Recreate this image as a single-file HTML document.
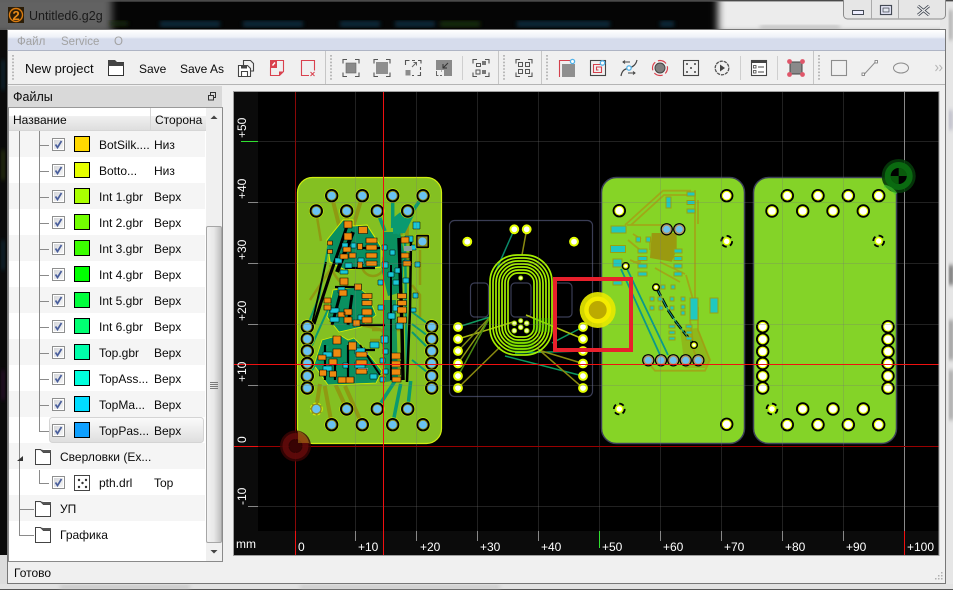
<!DOCTYPE html>
<html><head><meta charset="utf-8"><style>
html,body{margin:0;padding:0;background:#000}
#r{position:relative;width:953px;height:590px;overflow:hidden;background:#111}
svg{position:absolute;left:0;top:0;display:block}
text{font-family:"Liberation Sans","Noto Sans CJK SC",sans-serif;font-size:12px;fill:#0a0a0a}
.c text{fill:#fff}
</style></head><body><div id="r">
<svg width="953" height="590" viewBox="0 0 953 590">
<defs>
<linearGradient id="mg" x1="0" y1="0" x2="0" y2="1"><stop offset="0" stop-color="#fff"/><stop offset=".35" stop-color="#eef1f8"/><stop offset=".45" stop-color="#d6dcec"/><stop offset="1" stop-color="#d6dcec"/></linearGradient>
<linearGradient id="sg" x1="0" y1="0" x2="0" y2="1"><stop offset="0" stop-color="#fbfbfb"/><stop offset="1" stop-color="#dedede"/></linearGradient>
<linearGradient id="th" x1="0" y1="0" x2="1" y2="0"><stop offset="0" stop-color="#f2f2f2"/><stop offset=".5" stop-color="#e8e8e8"/><stop offset="1" stop-color="#bdbdbd"/></linearGradient>
<linearGradient id="cb" x1="0" y1="0" x2="1" y2="1"><stop offset="0" stop-color="#d4d6da"/><stop offset="1" stop-color="#f6f6f6"/></linearGradient>
<filter id="b4"><feGaussianBlur stdDeviation="4"/></filter>
<filter id="b2"><feGaussianBlur stdDeviation="2"/></filter>
<g id="p4"><circle r="6.7" fill="#000"/><circle r="4.9" fill="#e8ff00"/><circle r="3.8" fill="#fff"/></g>
<g id="p1"><circle r="7.2" fill="#d8f000"/><circle r="6.7" fill="#000"/><circle r="4.9" fill="#8e8e20"/><circle r="4" fill="#69c2f2"/></g>
<g id="p2"><circle r="4.9" fill="#e4ff00"/><circle r="2.9" fill="#fff"/></g>
<g id="pd"><circle r="5.4" fill="none" stroke="#000" stroke-width="1.8" stroke-dasharray="5 3.4"/><circle r="4" fill="#e8ff00"/><circle r="2.7" fill="#fff"/></g>
<g id="pg"><circle r="6.2" fill="#000"/><circle r="5" fill="#b09a68"/><circle r="3.5" fill="#6cc0ee"/></g>
<g id="ps"><circle r="4" fill="#000"/><circle r="2.6" fill="#e8ff00"/><circle r="1.5" fill="#fff"/></g>
<g id="cbx"><rect x=".5" y=".5" width="12" height="12" fill="#fff" stroke="#8e8f8f"/><rect x="2" y="2" width="9" height="9" fill="url(#cb)"/><path d="M3.5 6.5l2 3 4-6.5" fill="none" stroke="#4a5f9c" stroke-width="1.7"/></g>
<g id="fld"><path d="M.5 2.5h15v13H.5z" fill="#fff" stroke="#444"/><path d="M0 2h6l3-2h7v4H7L5 3H0z" fill="#fff"/><path d="M.5 3V.5h5l3 3h7.500" fill="none" stroke="#444"/><path d="M6 .5l3 3h7V1H8z" fill="#555"/></g>
<path id="cor" d="M-8 -4.500v-4h4M4 -8.500h4v4M8 4.500v4h-4M-4 8.500h-4v-4" fill="none" stroke="#555" stroke-width="1.100"/>
</defs>

<!-- desktop / title -->
<rect width="953" height="590" fill="#050505"/>
<rect x="718" y="-8" width="240" height="42" fill="#ececec" filter="url(#b4)"/>
<rect x="940" y="0" width="13" height="590" fill="#e6e6e6"/>
<rect x="0" y="0" width="953" height="1" fill="#4a4a4a"/>
<rect x="0" y="1" width="953" height="1" fill="#6a6a6a" opacity=".5"/>
<rect x="-10" y="-6" width="122" height="40" fill="#626262" filter="url(#b4)"/>
<g filter="url(#b2)" opacity=".75">
<rect x="110" y="21" width="18" height="5" fill="#1a3308"/><rect x="160" y="21" width="60" height="6" fill="#07384f"/><rect x="243" y="21" width="60" height="6" fill="#07384f"/><rect x="340" y="21" width="40" height="6" fill="#07384f"/><rect x="395" y="21" width="40" height="6" fill="#07384f"/><rect x="440" y="21" width="40" height="6" fill="#1e3a08"/><rect x="517" y="21" width="30" height="6" fill="#07384f"/><rect x="540" y="21" width="70" height="6" fill="#07384f"/><rect x="660" y="21" width="14" height="6" fill="#07384f"/>
</g>
<rect x="0" y="30" width="7" height="525" fill="#0a0a0a"/>
<g filter="url(#b2)" opacity=".6"><rect x="1" y="60" width="4" height="30" fill="#10384a"/><rect x="1" y="150" width="4" height="30" fill="#3a4a10"/><rect x="1" y="240" width="4" height="30" fill="#10384a"/><rect x="1" y="370" width="4" height="30" fill="#3a1040"/></g>
<rect x="0" y="555" width="7" height="35" fill="#dcdcdc"/>
<rect x="0" y="584" width="953" height="5" fill="#e2e2e2"/>
<rect x="0" y="589" width="953" height="1" fill="#555"/>
<rect x="60" y="585" width="130" height="4" fill="#c4c4c4" filter="url(#b2)"/><rect x="300" y="585" width="200" height="4" fill="#c8c8c8" filter="url(#b2)"/>
<g filter="url(#b2)"><rect x="949" y="10" width="3" height="30" fill="#999"/><rect x="949" y="110" width="3" height="20" fill="#aab"/><rect x="949" y="265" width="4" height="20" fill="#555"/><rect x="949" y="320" width="4" height="40" fill="#888"/><rect x="949" y="370" width="4" height="50" fill="#999"/></g>
<rect x="850" y="3" width="60" height="5" fill="#bbb" filter="url(#b2)"/><rect x="760" y="25" width="80" height="5" fill="#c4c4c4" filter="url(#b2)"/>

<!-- window buttons -->
<path d="M843.500 0v15a4 4 0 0 0 4 4h94a4 4 0 0 0 4-4V0" fill="#e6e6e6" stroke="#8a8a8a"/>
<path d="M871.500 0v19M898.500 0v19" stroke="#aaa"/>
<rect x="852.500" y="10.500" width="11" height="4" fill="#eef" stroke="#444a55"/>
<rect x="880.500" y="5.500" width="11" height="9" fill="#eef" stroke="#444a55" stroke-width="1.200"/><rect x="883" y="8" width="6" height="4" fill="#e4e8f0" stroke="#444a55" stroke-width=".8"/>
<path d="M918 6l11 9M929 6l-11 9" stroke="#444a55" stroke-width="3"/><path d="M918 6l11 9M929 6l-11 9" stroke="#eee" stroke-width="1.200"/>

<!-- title icon + text -->
<rect x="8" y="7" width="16" height="16" fill="#2b1d08"/>
<circle cx="16" cy="15" r="6.500" fill="none" stroke="#d87a10" stroke-width="1.400"/>
<text x="12.500" y="20" style="font-size:13px;font-weight:bold;fill:#e88a18">2</text>
<text x="29" y="20" style="font-size:12.500px;fill:#1a1a1a">Untitled6.g2g</text>

<!-- client -->
<rect x="7" y="29" width="939" height="555" fill="#f0f0f0"/>
<rect x="7.500" y="29.500" width="938" height="554" fill="none" stroke="#777"/>
<rect x="8" y="30" width="937" height="20" fill="url(#mg)"/>
<rect x="8" y="50" width="937" height="1" fill="#aeb4c4"/>
<rect x="8" y="84" width="937" height="1" fill="#b4b4b4"/>
<rect x="8" y="51" width="937" height="33" fill="#f0f0f0"/>
<text x="17" y="45" style="font-size:11.500px;fill:#a2a2a2">Файл</text>
<text x="61" y="45" style="font-size:11.500px;fill:#a2a2a2">Service</text>
<text x="114" y="45" style="font-size:11.500px;fill:#a2a2a2">О</text>

<!-- toolbar separators -->
<g stroke="#b8b8b8" stroke-width="2" stroke-dasharray="1.600 1.700" fill="none"><path d="M13 55v26M331 55v26M504 55v26M547 55v26M819 55v26"/></g>
<path d="M325.500 51v33M498.500 51v33M541.500 51v33M813.500 51v33" stroke="#c6c6c6"/>
<path d="M462.500 56v24M740.500 56v24M777.500 56v24" stroke="#cfcfcf"/>
<text x="25" y="73" style="font-size:13px">New project</text>
<text x="139" y="73">Save</text>
<text x="180" y="73">Save As</text>

<!-- toolbar icons -->
<path d="M108.500 62.500h15v13h-15z" fill="#fff" stroke="#333"/><path d="M108 60h7l2.500 2.500h6.500v3.500H108z" fill="#444"/>
<g fill="none" stroke="#444" stroke-width="1.100"><path d="M238.500 65.500h9l3 3v8h-12z" fill="#fff"/><path d="M243.500 65v-4.500h7l3 3v7.500h-3"/><path d="M241.500 71.500h6v5h-6z"/></g><rect x="241" y="65" width="6" height="3.500" fill="#444"/>
<g fill="none" stroke="#d9414e" stroke-width="1.100"><path d="M277 60.500h6.500v11l-4 4h-9v-8"/></g><path d="M270 60h7v8h-7z" fill="#d9414e"/><path d="M272 65l2.500-3 1 1-2.500 3z" fill="#fff"/><path d="M279 76v-4.500h4.500z" fill="#d9414e"/>
<path d="M309 75.500h-7.500v-15h13v10" fill="none" stroke="#d9414e" stroke-width="1.100"/><path d="M310.500 72l4 4M314.500 72l-4 4" stroke="#d9414e" stroke-width="1"/>

<use href="#cor" x="351" y="68"/><rect x="346" y="63" width="10" height="10" fill="#8a8a8a" stroke="#666" stroke-width=".6"/>
<use href="#cor" x="382" y="68"/><rect x="376" y="62" width="12" height="12" fill="#8f8f8f"/>
<path d="M405.500 65v-4.500h4M412 60.500h3M418 60.500h3v3M420.500 67v3M420.500 72v3.500h-3M414 75.500h-2" fill="none" stroke="#555" stroke-width="1.100"/><rect x="405.500" y="70" width="5" height="5.500" fill="#8c8c8c"/><path d="M412 67l4.500-4.500M413.500 62.500h3v3" fill="none" stroke="#666"/>
<path d="M436 60h16v16h-8v-6h-8z" fill="#8a8a8a"/><path d="M448 63l-5 5M443 64v4h4" fill="none" stroke="#333"/><path d="M436.500 71v4.500h2M440 75.500h2M442 71h-1" fill="none" stroke="#666"/>
<use href="#cor" x="481" y="68"/><rect x="476.500" y="63.500" width="4" height="3" fill="none" stroke="#555"/><rect x="482" y="61" width="4" height="4" fill="#777"/><rect x="482" y="70" width="4" height="4" fill="#777"/><rect x="476" y="70" width="4" height="4" fill="none" stroke="#555"/>
<use href="#cor" x="524" y="68"/><g fill="none" stroke="#555"><rect x="518.500" y="62.500" width="4" height="4"/><rect x="525.500" y="62.500" width="4" height="4"/><rect x="518.500" y="69.500" width="4" height="4"/><rect x="525.500" y="69.500" width="4" height="4"/></g>

<path d="M559.500 77v-16.500h11" fill="none" stroke="#d4404c" stroke-width="1.100"/><rect x="562" y="64" width="13" height="13" fill="#8f8f8f"/><circle cx="572.500" cy="61.500" r="2.100" fill="#fff" stroke="#54b4ea" stroke-width="1.300"/>
<rect x="590.500" y="60.500" width="15" height="15" fill="none" stroke="#444" stroke-width="1.100"/><path d="M602 64.500h-8.500v8h8v-5.500h-5v3h2" fill="none" stroke="#d4404c" stroke-width="1.100"/><circle cx="602.500" cy="63" r="2.200" fill="#fff" stroke="#54b4ea" stroke-width="1.300"/>
<path d="M621 76c1-6 4-7 8-8s7-3 8-8" fill="none" stroke="#444" stroke-width="1.200"/><circle cx="629" cy="68" r="2.200" fill="#fff" stroke="#54b4ea" stroke-width="1.300"/><path d="M623 62h7M625 60.500l-2 1.500 2 1.500M628 73h7M633 71.500l2 1.500-2 1.500" fill="none" stroke="#444"/>
<circle cx="660" cy="68" r="5" fill="#7f7f7f" stroke="#444"/><circle cx="660" cy="68" r="7.500" fill="none" stroke="#d9414e" stroke-width="1.200" stroke-dasharray="9 3" stroke-dashoffset="3"/>
<rect x="683.500" y="60.500" width="15" height="15" fill="none" stroke="#444" stroke-width="1.100"/><g fill="#444"><circle cx="687" cy="64" r="1"/><circle cx="695" cy="64" r="1"/><circle cx="691" cy="68" r="1"/><circle cx="687" cy="72" r="1"/><circle cx="695" cy="72" r="1"/></g>
<circle cx="722" cy="68" r="6.800" fill="none" stroke="#555" stroke-width="1.300" stroke-dasharray="3.300 .9"/><path d="M720 64.500v7l5-3.500z" fill="#444"/>
<rect x="751.500" y="60.500" width="15" height="15" fill="#fff" stroke="#444" stroke-width="1.100"/><rect x="751" y="60" width="16" height="3" fill="#444"/><path d="M758 67h6M758 72h6" stroke="#444"/><rect x="753.500" y="65.500" width="2.500" height="2.500" fill="none" stroke="#444" stroke-width=".8"/><rect x="753.500" y="70.500" width="2.500" height="2.500" fill="none" stroke="#444" stroke-width=".8"/>
<rect x="790" y="62" width="12" height="12" fill="#8a8a8a" stroke="#444"/><g fill="#e0566a"><circle cx="789.500" cy="61.500" r="2.400"/><circle cx="802.500" cy="61.500" r="2.400"/><circle cx="789.500" cy="74.500" r="2.400"/><circle cx="802.500" cy="74.500" r="2.400"/></g>
<rect x="831.500" y="60.500" width="15" height="15" fill="none" stroke="#8c8c8c" stroke-width="1.100"/>
<path d="M864 74.500l11-12" stroke="#8c8c8c"/><rect x="862" y="73" width="2.500" height="2.500" fill="#fff" stroke="#777" stroke-width=".8"/><rect x="875" y="60.500" width="2.500" height="2.500" fill="#fff" stroke="#777" stroke-width=".8"/>
<ellipse cx="901" cy="68" rx="7.500" ry="5" fill="none" stroke="#8c8c8c"/>
<path d="M935.500 65l2.500 3-2.500 3M939.500 65l2.500 3-2.500 3" fill="none" stroke="#b4b4b4"/>

<!-- dock -->
<rect x="8" y="86" width="214" height="22" fill="#d9d9d9"/>
<text x="13" y="101" style="font-size:12.500px">Файлы</text>
<rect x="210.500" y="92.500" width="5" height="5" fill="none" stroke="#333"/><rect x="208.500" y="95.500" width="5" height="4.500" fill="#d9d9d9" stroke="#333"/>
<rect x="8" y="108" width="215" height="453.500" fill="#fff"/>
<path d="M8.500 108v453.500h214V108" fill="none" stroke="#8a8a8a"/><path d="M8 107.500h215" stroke="#9a9a9a"/>
<rect x="9" y="108" width="198" height="22" fill="url(#sg)"/><rect x="9" y="108" width="198" height="8" fill="#fff"/>
<path d="M150.500 108v22M9 130.500h198" stroke="#d6d6d6"/>
<text x="13" y="124">Название</text><text x="155" y="124">Сторона</text>

<!-- rows -->
<g fill="#f5f5f5"><rect x="9" y="131" width="196" height="26"/><rect x="9" y="183" width="196" height="26"/><rect x="9" y="235" width="196" height="26"/><rect x="9" y="287" width="196" height="26"/><rect x="9" y="339" width="196" height="26"/><rect x="9" y="391" width="196" height="26"/><rect x="9" y="443" width="196" height="26"/><rect x="9" y="495" width="196" height="26"/></g>
<path d="M19.500 131v404.500H34M19.500 509.500H34M39.500 131v300.500H49M39.500 470v13.500H49" fill="none" stroke="#8a8a8a"/>
<path d="M39.500 145.500H49M39.500 171.500H49M39.500 197.500H49M39.500 223.500H49M39.500 249.500H49M39.500 275.500H49M39.500 301.500H49M39.500 327.500H49M39.500 353.500H49M39.500 379.500H49M39.500 405.500H49" stroke="#8a8a8a"/>
<rect x="49.500" y="417.500" width="154" height="25" rx="3" fill="url(#sg)" stroke="#d4d4d4"/>
<g>
<use href="#cbx" x="52" y="138"/><use href="#cbx" x="52" y="164"/><use href="#cbx" x="52" y="190"/><use href="#cbx" x="52" y="216"/><use href="#cbx" x="52" y="242"/><use href="#cbx" x="52" y="268"/><use href="#cbx" x="52" y="294"/><use href="#cbx" x="52" y="320"/><use href="#cbx" x="52" y="346"/><use href="#cbx" x="52" y="372"/><use href="#cbx" x="52" y="398"/><use href="#cbx" x="52" y="424"/><use href="#cbx" x="52" y="476"/>
</g>
<g stroke="#000">
<rect x="74.500" y="136.500" width="15" height="15" fill="#ffd800"/>
<rect x="74.500" y="162.500" width="15" height="15" fill="#e6ff00"/>
<rect x="74.500" y="188.500" width="15" height="15" fill="#aaff00"/>
<rect x="74.500" y="214.500" width="15" height="15" fill="#72ff00"/>
<rect x="74.500" y="240.500" width="15" height="15" fill="#3cff00"/>
<rect x="74.500" y="266.500" width="15" height="15" fill="#00ff00"/>
<rect x="74.500" y="292.500" width="15" height="15" fill="#00ff3c"/>
<rect x="74.500" y="318.500" width="15" height="15" fill="#00ff72"/>
<rect x="74.500" y="344.500" width="15" height="15" fill="#00ffaa"/>
<rect x="74.500" y="370.500" width="15" height="15" fill="#00ffdd"/>
<rect x="74.500" y="396.500" width="15" height="15" fill="#00ddff"/>
<rect x="74.500" y="422.500" width="15" height="15" fill="#0ea0ff"/>
</g>
<text x="99" y="149">BotSilk....</text><text x="154" y="149">Низ</text>
<text x="99" y="175">Botto...</text><text x="154" y="175">Низ</text>
<text x="99" y="201">Int 1.gbr</text><text x="154" y="201">Верх</text>
<text x="99" y="227">Int 2.gbr</text><text x="154" y="227">Верх</text>
<text x="99" y="253">Int 3.gbr</text><text x="154" y="253">Верх</text>
<text x="99" y="279">Int 4.gbr</text><text x="154" y="279">Верх</text>
<text x="99" y="305">Int 5.gbr</text><text x="154" y="305">Верх</text>
<text x="99" y="331">Int 6.gbr</text><text x="154" y="331">Верх</text>
<text x="99" y="357">Top.gbr</text><text x="154" y="357">Верх</text>
<text x="99" y="383">TopAss...</text><text x="154" y="383">Верх</text>
<text x="99" y="409">TopMa...</text><text x="154" y="409">Верх</text>
<text x="99" y="435">TopPas...</text><text x="154" y="435">Верх</text>
<path d="M17 461l6-5v5z" fill="#333"/>
<use href="#fld" x="35" y="449"/><text x="60" y="461">Сверловки (Ex...</text>
<rect x="74.500" y="475.500" width="15" height="15" fill="#fff" stroke="#444"/><g fill="#333"><circle cx="79" cy="480" r="1.200"/><circle cx="86" cy="480" r="1.200"/><circle cx="82.500" cy="483" r="1.200"/><circle cx="79" cy="487" r="1.200"/><circle cx="86" cy="487" r="1.200"/></g>
<text x="99" y="487">pth.drl</text><text x="154" y="487">Top</text>
<use href="#fld" x="35" y="501"/><text x="60" y="513">УП</text>
<use href="#fld" x="35" y="527"/><text x="60" y="539">Графика</text>

<!-- scrollbar -->
<rect x="206" y="108" width="16" height="453" fill="#f0f0f0"/>
<path d="M210.500 119l3.500-3.500 3.500 3.500z" fill="#444"/>
<rect x="206.500" y="226.500" width="15" height="316" rx="1.500" fill="url(#th)" stroke="#a6a6a6"/>
<path d="M210 382.500h8M210 384.500h8M210 386.500h8M210 388.500h8" stroke="#7a7a7a"/>
<path d="M210.500 550l3.500 3.500 3.500-3.500z" fill="#444"/>
<text x="14" y="577">Готово</text>
<g fill="#b0b0b0"><rect x="941" y="578" width="1.500" height="1.500"/><rect x="938" y="578" width="1.500" height="1.500"/><rect x="941" y="575" width="1.500" height="1.500"/><rect x="935" y="578" width="1.500" height="1.500"/><rect x="938" y="575" width="1.500" height="1.500"/><rect x="941" y="572" width="1.500" height="1.500"/></g>

<!-- CANVAS -->
<svg x="234" y="92" width="705" height="463" viewBox="234 92 705 463" class="c">
<rect x="234" y="92" width="705" height="463" fill="#000"/>
<rect x="234" y="92" width="24" height="463" fill="#0b0b0b"/>
<rect x="234" y="531" width="705" height="24" fill="#0b0b0b"/>

<!-- Board 1 -->
<rect x="297.500" y="177.500" width="144" height="266" rx="15" fill="#84c022" stroke="#d0ee10" stroke-width="1.200"/>
<!-- olive -->
<g fill="none" stroke="#8f9a12" stroke-width="4">
<path d="M331.700 196l9 36M362.300 196l-9 30M346.700 211v14M407.700 211l-1 24"/>
<path d="M331.700 424l-7-38M346.700 409l-11-24M362 424l-17-38M316 409l4-25"/>
</g>
<g fill="none" stroke="#8f9a12" stroke-width="2.500">
<path d="M316 211l5 30M330 265q8 20 20 22M310 300l30-45"/>
<path d="M355 318v6l25 5 10 10v30l-10 10M372 330h30M380 340h-10M345 345l-5 30"/>
<path d="M412 285l8 10v22M420 250v35M398 225l4 10"/>
<circle cx="373" cy="265" r="11"/>
</g>
<!-- pours -->
<path d="M327 240l16-20h10v6l14-1 11 17 3 5v20l-36 3-15-8z" fill="#0a9060" stroke="#d8f000"/>
<path d="M333 290l25-3 10 8 8 20-15 12-22 5-12-15z" fill="#0a9060" stroke="#d8f000" stroke-width=".8"/>
<path d="M322 340l18-5 8 5 6-2 8 8 20 25-6 12-48 2-14-20z" fill="#0a9060" stroke="#d8f000" stroke-width=".8"/>
<path d="M384 232h16l4 20-2 40-14 4-6-24z" fill="#0a9060"/>
<path d="M384 300h12l2 80-12 2-4-40z" fill="#0a9060" opacity=".9"/>
<!-- teal -->
<g fill="none" stroke="#0a9a70" stroke-width="3.500">
<path d="M377 211l8 20M392.700 196v32M423 196l-26 38"/>
<path d="M377 409l18-28M392.700 424l8-40M407.700 409l3-28"/>
<path d="M405 240l2 140" stroke-width="2.500"/>
</g>
<g fill="none" stroke="#0a9a70" stroke-width="2">
<path d="M307 327l12-30 10-55M309 352l20-45M308 376l20-30"/>
<path d="M432 327l-20-15M432 352l-20-20M432 376l-20-16M432 339l-20-15"/>
</g>
<path d="M393 218l10-8 12 3-10 20-12 1z" fill="#0a9a70"/>
<!-- black clearances -->
<g fill="none" stroke="#000">
<path d="M347 226l-6 18-12 34-15 46" stroke-width="3"/>
<path d="M353 232l-8 20-8 20" stroke-width="4"/>
<path d="M326 262l-14 62" stroke-width="1.800"/>
<path d="M399 238l3 90 1 52" stroke-width="3.500"/>
<path d="M411 240l-1 70-3 72" stroke-width="2.500"/>
<path d="M391 265v115" stroke-width="2"/>
<path d="M360 248h20M345 268h30M335 287h22M355 325h30M335 360v20M348 345v35M325 345v35M360 350h15" stroke-width="2.200"/>
<path d="M340 295l-8 30M352 295l-4 30" stroke-width="3"/>
<path d="M360 345l20 30" stroke-width="2"/>
</g>
<!-- cyan -->
<path fill="#18c8d8" stroke="#000" stroke-width=".5" d="M342 243h6v6h-6zM351 243h5v5h-5zM335 258h7v5h-7zM358 258h6v6h-6zM340 270h8v4h-8zM345 263h7v5h-7zM382 245h5v5h-5zM390 250h5v5h-5zM382 262h6v6h-6zM395 268h5v5h-5zM404 260h6v5h-6zM411 245h5v5h-5zM415 262h5v5h-5zM388 272h6v5h-6zM378 280h5v5h-5zM393 280h6v5h-6zM403 278h6v5h-6zM405 236h8v6h-8zM338 287h7v6h-7zM330 308h9v5h-9zM330 317h9v5h-9zM358 315h6v5h-6zM370 342h9v6h-9zM323 352h9v5h-9zM323 366h9v5h-9zM381 336h7v7h-7zM388 313h7v6h-7zM396 323h7v6h-7zM383 349h5v5h-5zM380 358h5v5h-5zM383 369h5v5h-5zM380 377h5v5h-5zM370 374h7v5h-7zM411 308h5v4h-5zM413 293h5v5h-5zM355 362h10v6h-10zM355 348h10v6h-10zM378 305h6v5h-6zM393 305h6v6h-6zM343 363h5v5h-5zM413 222h7v7h-7z"/>
<path fill="#8fa0a0" d="M404 246h8v5h-8zM358 352h10v3h-10zM358 368h10v3h-10z"/>
<!-- orange -->
<path fill="#ee8a10" stroke="#000" stroke-width=".6" d="M344 221h8v7h-8zM358.500 226.500h9v7h-9zM344 233h8v7h-8zM366 238h11v5h-11zM366 245h11v5h-11zM366 253h11v5h-11zM327.500 241h5v4h-5zM327.500 249.500h5v4h-5zM343 247h8v5h-8zM340 254h8v5h-8zM349 253h7v5h-7zM357.500 243.500h5v6h-5zM357.500 262h5v6h-5zM366 261h11v5h-11zM401 237h8v6h-8zM401 253h8v5h-8zM403 261h8v5h-8zM340 278h8v7h-8zM339 290h8v6h-8zM354.500 284h7v6h-7zM362 293.500h10v5h-10zM362 300.500h10v5h-10zM397.500 293.500h9v5h-9zM397.500 300.500h9v5h-9zM324 298h7v5h-7zM333 336h8v8h-8zM333 349h8v8h-8zM348.500 342h8v8h-8zM356 352h11v5h-11zM356 360h11v5h-11zM356 369h11v5h-11zM391.500 353h9v6h-9zM391.500 361h9v6h-9zM391.500 369h9v6h-9zM392 377h9v5h-9zM319.500 370h7v6h-7zM329.500 371h7v6h-7zM338 377h8v6h-8zM346 377h8v6h-8zM318 355h8v5h-8zM329 359h8v6h-8zM344 317h8v6h-8zM362 309h10v6h-10zM362 317h10v6h-10zM324 305h7v5h-7zM397.500 307h9v6h-9zM397.500 317h9v6h-9zM353 320h7v6h-7zM344 309h8v6h-8zM338 312h7v5h-7z"/>
<!-- pads b1 -->
<use href="#p1" x="331.700" y="195.700"/><use href="#p1" x="362.300" y="195.700"/><use href="#p1" x="392.700" y="195.700"/><use href="#p1" x="423" y="195.700"/>
<use href="#p1" x="316.300" y="211"/><use href="#p1" x="346.700" y="211"/><use href="#p1" x="377.300" y="211"/><use href="#p1" x="407.700" y="211"/>
<rect x="415.500" y="234.500" width="14" height="14" rx="2" fill="#000" stroke="#d8f000" stroke-width=".6"/><rect x="417.500" y="236.500" width="10" height="10" fill="#8e8e20"/><circle cx="422.500" cy="241.500" r="4" fill="#69c2f2"/>
<use href="#p1" x="307.300" y="326.700"/><use href="#p1" x="307.300" y="339"/><use href="#p1" x="307.300" y="351"/><use href="#p1" x="307.300" y="363.500"/><use href="#p1" x="307.300" y="376"/><use href="#p1" x="307.300" y="388"/>
<use href="#p1" x="431.700" y="326.700"/><use href="#p1" x="431.700" y="339"/><use href="#p1" x="431.700" y="351"/><use href="#p1" x="431.700" y="363.500"/><use href="#p1" x="431.700" y="376"/><use href="#p1" x="431.700" y="388"/>
<circle cx="316.300" cy="409" r="6" fill="#8e8e20" stroke="#d8f000" stroke-dasharray="3 2"/><circle cx="316.300" cy="409" r="4.100" fill="#69c2f2"/>
<use href="#p1" x="346.700" y="409"/><use href="#p1" x="377.300" y="409"/><use href="#p1" x="407.700" y="409"/>
<use href="#p1" x="331.700" y="424.700"/><use href="#p1" x="362.300" y="424.700"/><use href="#p1" x="392.700" y="424.700"/><use href="#p1" x="423" y="424.700"/>

<!-- Board 2 -->
<rect x="449.500" y="220.500" width="143" height="176" rx="5" fill="none" stroke="#3a3d55" stroke-width="1.200"/>
<g fill="none" stroke="#3a3d55" stroke-width="1.200"><rect x="470.500" y="283" width="18" height="34" rx="4"/><rect x="511" y="283" width="20" height="34" rx="4"/><rect x="553" y="283" width="19" height="34" rx="4"/></g>
<g fill="none" stroke-width="1.500">
<path d="M514.300 229.300L495 273" stroke="#0a8a6a"/><path d="M526.700 229.300L522 255" stroke="#8a8a10"/>
<path d="M458 327l32-10" stroke="#0e9a60"/><path d="M458 339l55-17" stroke="#a8b810"/><path d="M458 351l32-34" stroke="#7a8a10"/><path d="M458 363.500l32-46" stroke="#8a9a10"/><path d="M458 376l32-59" stroke="#4a8a10"/><path d="M458 388l42-41" stroke="#8a8a10"/>
<path d="M583 327l-31 16" stroke="#0e9a60"/><path d="M583 339l-57-24" stroke="#a8c010"/><path d="M583 351l-68 2" stroke="#0e9a60"/><path d="M583 363.500l-43-13" stroke="#8a8a10"/><path d="M583 376l-78-20" stroke="#0e9a60"/><path d="M583 388l-46-40" stroke="#8a8a10"/>
</g>
<g fill="none" stroke="#a4ee00" stroke-width="1.700">
<rect x="490" y="255" width="62" height="100" rx="27"/><rect x="493" y="258" width="56" height="94" rx="25"/><rect x="496" y="261" width="50" height="88" rx="22"/><rect x="499" y="264" width="44" height="82" rx="19"/><rect x="502" y="267" width="38" height="76" rx="16"/><rect x="505" y="270" width="32" height="70" rx="13"/><rect x="508" y="273" width="26" height="64" rx="10"/>
</g>
<path d="M507 340h28l-2 12h-24zM533 318h18v14h-18z" fill="#40d000" opacity=".28"/>
<g><use href="#p2" x="467.300" y="241.700"/><use href="#p2" x="574" y="241.700"/><use href="#p2" x="514.300" y="229.300"/><use href="#p2" x="526.700" y="229.300"/>
<use href="#p2" x="458" y="327"/><use href="#p2" x="458" y="339"/><use href="#p2" x="458" y="351"/><use href="#p2" x="458" y="363.500"/><use href="#p2" x="458" y="376"/><use href="#p2" x="458" y="388"/>
<use href="#p2" x="583" y="327"/><use href="#p2" x="583" y="339"/><use href="#p2" x="583" y="351"/><use href="#p2" x="583" y="363.500"/><use href="#p2" x="583" y="376"/><use href="#p2" x="583" y="388"/></g>
<g fill="#f4ffb0" stroke="#a8e000"><circle cx="520.700" cy="278" r="2"/><circle cx="520.700" cy="320.700" r="2"/><circle cx="514.300" cy="323.300" r="2.300"/><circle cx="526.700" cy="323.300" r="2.300"/><circle cx="520.700" cy="327.300" r="2.300"/><circle cx="514.300" cy="330.700" r="2.300"/><circle cx="526.700" cy="330.700" r="2.300"/></g>

<!-- Board 3 -->
<rect x="601.500" y="177.500" width="143" height="266" rx="15" fill="#86d426" stroke="#3c4058" stroke-width="1.500"/>
<path d="M651.700 233h25v17l-5 11.700-21.700-3.700z" fill="#9a9a10"/>
<g fill="none" stroke="#a0a818" stroke-width="1.800">
<path d="M625 225l38-34.300h28M631 225l33-30h26M627 225h40M695 190v115M698 200v24M633 234l8 5M628 240l12 10M650 238v12M630 260l12 5M660 262l25 12M655 268l25 14M686 275l8 28"/>
<path d="M650 365l5 5.700h50l5-10.700-12-30v-23M692 345l5 15M690 320l4 30"/>
<path d="M633 262h8"/>
</g>
<path d="M680 330l18-2 12 32-5 8h-20z" fill="#9a9a10" opacity=".45"/>
<g fill="none" stroke="#0a9a8a" stroke-width="1.800"><path d="M625.700 266l42.300 89M621 269l40 88"/></g>
<path d="M656 287l12 23 8 12 18 23" fill="none" stroke="#000" stroke-width="2.800" stroke-dasharray="10 3"/><path d="M656 287l12 23 8 12 18 23" fill="none" stroke="#0a9a8a" stroke-width="1"/>
<path fill="#20c8c0" stroke="#9aa010" stroke-width="1" d="M611 226h15v7h-15zM610.500 245.500h15v7h-15zM613 259h9v8h-9zM613 281h9v4h-9zM636 237h4.500v5H636zM646 237h4.500v5H646zM638 249h9v4h-9zM638 256.500h9v4h-9zM638 264h9v4h-9zM638 272h9v4h-9zM674 249h8v4h-8zM674 256.500h8v4h-8zM674 264h8v4h-8zM674 272h8v4h-8zM666 197h5v11h-5zM687 192h8v4h-8zM687 200.500h8v4h-8zM687 209h8v4h-8zM690 298h8v22h-8zM710 298h8v15h-8zM661 285h4v4h-4zM671 285h4v4h-4zM650 297h4v4h-4zM658 297h4v4h-4zM670 297h4v4h-4zM681 297h4v4h-4zM681 305h4v4h-4zM650 306h4v4h-4zM659 306h4v4h-4zM670 306h4v4h-4zM681 311h4v4h-4zM669 325h6v3h-6zM669 331h6v3h-6zM669 337h6v3h-6zM686 325h6v3h-6zM686 331h6v3h-6zM686 337h6v3h-6z"/>
<use href="#p4" x="619.300" y="210.700"/><use href="#p4" x="726.700" y="195.700"/><use href="#pd" x="726.700" y="241.300"/><use href="#pd" x="619.300" y="409"/><use href="#p4" x="726.700" y="424.300"/>
<use href="#pg" x="666.700" y="229.300"/><use href="#pg" x="679.300" y="229.300"/>
<use href="#pg" x="648.300" y="360.300"/><use href="#pg" x="661" y="360.300"/><use href="#pg" x="673.300" y="360.300"/><use href="#pg" x="685.700" y="360.300"/><use href="#pg" x="698.300" y="360.300"/>
<use href="#ps" x="625.700" y="266"/><use href="#ps" x="656" y="287.300"/><use href="#ps" x="694" y="345"/>

<!-- Board 4 -->
<rect x="753.500" y="177.500" width="143" height="266" rx="15" fill="#84d328" stroke="#3c4058" stroke-width="1.500"/>
<use href="#p4" x="787.300" y="195.700"/><use href="#p4" x="818" y="195.700"/><use href="#p4" x="848.300" y="195.700"/><use href="#p4" x="878.700" y="195.700"/>
<use href="#p4" x="772" y="211"/><use href="#p4" x="802.700" y="211"/><use href="#p4" x="833" y="211"/><use href="#p4" x="863.300" y="211"/>
<use href="#pd" x="878.700" y="241"/>
<use href="#p4" x="762.700" y="326.700"/><use href="#p4" x="762.700" y="339.300"/><use href="#p4" x="762.700" y="351.500"/><use href="#p4" x="762.700" y="363.500"/><use href="#p4" x="762.700" y="376"/><use href="#p4" x="762.700" y="388"/>
<use href="#p4" x="888" y="326.700"/><use href="#p4" x="888" y="339.300"/><use href="#p4" x="888" y="351.500"/><use href="#p4" x="888" y="363.500"/><use href="#p4" x="888" y="376"/><use href="#p4" x="888" y="388"/>
<use href="#pd" x="772" y="409"/><use href="#p4" x="802.700" y="409"/><use href="#p4" x="833" y="409"/><use href="#p4" x="863.300" y="409"/>
<use href="#p4" x="787.300" y="424.700"/><use href="#p4" x="818" y="424.700"/><use href="#p4" x="848.300" y="424.700"/><use href="#p4" x="878.700" y="424.700"/>

<!-- grid -->
<g stroke="#777" stroke-opacity=".28" stroke-width="1">
<path d="M355.500 92v439M416.500 92v439M477.500 92v439M538.500 92v439M599.500 92v439M660.500 92v439M721.500 92v439M782.500 92v439M843.500 92v439"/>
<path d="M258 141.500h681M258 202.500h681M258 263.500h681M258 324.500h681M258 385.500h681M258 506.500h681"/>
</g>
<path d="M904.500 92v439" stroke="#8a8a8a" stroke-width="1"/>
<path d="M295.500 92v439" stroke="#8a0808"/>
<path d="M234 446.500h705" stroke="#900"/>

<!-- markers -->
<circle cx="898.700" cy="176" r="17" fill="#063a0a" opacity=".9"/><circle cx="898.700" cy="176" r="11" fill="none" stroke="#0a6a10" stroke-width="6"/><circle cx="898.700" cy="176" r="8" fill="#0a5a0c"/><path d="M890.700 176a8 8 0 0 1 8-8v8zM898.700 176h8a8 8 0 0 1-8 8z" fill="#000"/>
<path d="M884 186q8 2 12 8" stroke="#44d030" stroke-width="3" fill="none" opacity=".6"/>
<circle cx="295.500" cy="446" r="15.500" fill="#3a0404" opacity=".85"/><circle cx="295.500" cy="446" r="10" fill="none" stroke="#600a0a" stroke-width="6" opacity=".9"/><circle cx="295.500" cy="446" r="6" fill="#380303"/>
<path d="M298 431a15 15 0 0 1 11 12h-11z" fill="#c08818" opacity=".5"/>

<!-- bright guides -->
<path d="M383.500 92v463M234 364.500h705" stroke="#f01010" stroke-width="1"/>

<!-- highlight -->
<circle cx="597.700" cy="310" r="18" fill="#e6e800" opacity=".92"/><circle cx="597.700" cy="310" r="13.500" fill="#f4ec00"/><circle cx="597.700" cy="310" r="9" fill="#bcaa00"/>
<rect x="555" y="279" width="76" height="71" fill="none" stroke="#e8202c" stroke-width="4"/>

<!-- rulers -->
<g stroke="#888"><path d="M355.500 531v10M416.500 531v10M477.500 531v10M538.500 531v10M660.500 531v10M721.500 531v10M782.500 531v10M843.500 531v10"/><path d="M248 202.500h10M248 263.500h10M248 324.500h10M248 385.500h10M248 506.500h10"/></g>
<path d="M599.500 531v17" stroke="#30e030"/><path d="M241 141.500h17" stroke="#30e030"/>
<path d="M295.500 531v24M904.500 531v24" stroke="#f01010"/><path d="M234 446.500h24" stroke="#f01010"/>
<g style="font-size:12.500px">
<text x="236" y="548" style="font-size:12px">mm</text>
<text x="298" y="551">0</text><text x="358" y="551">+10</text><text x="420" y="551">+20</text><text x="480" y="551">+30</text><text x="541" y="551">+40</text><text x="602" y="551">+50</text><text x="663" y="551">+60</text><text x="724" y="551">+70</text><text x="785" y="551">+80</text><text x="846" y="551">+90</text><text x="907" y="551">+100</text>
<text transform="translate(246 138) rotate(-90)">+50</text>
<text transform="translate(246 199) rotate(-90)">+40</text>
<text transform="translate(246 260) rotate(-90)">+30</text>
<text transform="translate(246 321) rotate(-90)">+20</text>
<text transform="translate(246 382) rotate(-90)">+10</text>
<text transform="translate(246 443) rotate(-90)">0</text>
<text transform="translate(246 505) rotate(-90)">-10</text>
</g>
</svg>
<rect x="233.500" y="91.500" width="705.500" height="464" fill="none" stroke="#a0a0a0"/>
</svg>
</div></body></html>
